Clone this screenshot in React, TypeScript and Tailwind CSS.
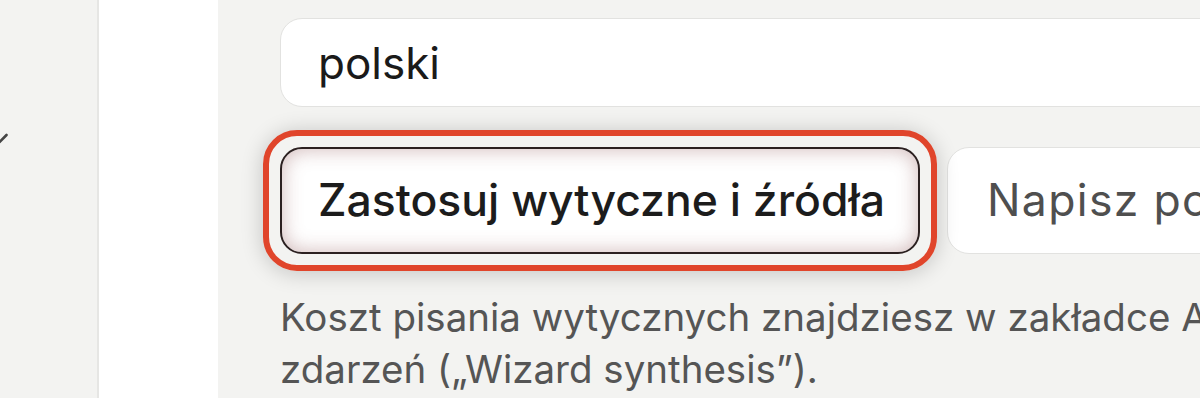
import React from "react";

export default function App() {
  return (
    <div className="flex h-[398px] w-[1200px] overflow-hidden bg-[#f3f3f1] font-['Inter','Noto_Sans',sans-serif]">
      <aside className="relative w-[99px] shrink-0 border-r-2 border-[#e6e6e4] bg-[#f3f3f1]">
        <svg
          className="absolute left-[-10px] top-[130px] h-[16px] w-[20px]"
          viewBox="0 0 20 16"
          fill="none"
        >
          <path
            d="M2 4l7.5 8 7-7"
            stroke="#454545"
            strokeWidth="2.6"
            strokeLinecap="round"
            strokeLinejoin="round"
          />
        </svg>
      </aside>
      <div className="w-[119px] shrink-0 bg-white" />
      <main className="flex-1 overflow-hidden pl-[62px] pt-[18px]">
        <div className="flex w-[1200px] flex-col">
          <div className="flex h-[89px] items-center rounded-[22px] border border-[#e2e2e0] bg-white px-[37px] text-[44px] text-[#1a1a1a]">
            polski
          </div>
          <div className="mt-[40px] flex items-center gap-[27px]">
            <div className="relative shrink-0">
              <div className="pointer-events-none absolute -inset-[17px] rounded-[34px] border-[6px] border-[#e0452b] shadow-[0_2px_22px_rgba(0,0,0,0.2)]" />
              <button className="relative flex h-[107px] w-[640px] items-center whitespace-nowrap rounded-[22px] border-2 border-[#2b2020] bg-white px-[36px] text-[44.5px] font-medium text-[#1c1c1c] shadow-[inset_0_0_20px_rgba(140,80,80,0.42)]">
                Zastosuj wytyczne i źródła
              </button>
            </div>
            <button className="flex h-[107px] shrink-0 items-center whitespace-nowrap rounded-[22px] border border-[#e2e2e0] bg-white px-[39px] text-[44.5px] tracking-[0.03em] text-[#4f4f4f]">
              Napisz po polsku
            </button>
          </div>
          <p className="mt-[37px] whitespace-nowrap text-[38.5px] leading-[52px] text-[#555555]">
            Koszt pisania wytycznych znajdziesz w zakładce Aktywność
            <br />
            zdarzeń („Wizard synthesis”).
          </p>
        </div>
      </main>
    </div>
  );
}
